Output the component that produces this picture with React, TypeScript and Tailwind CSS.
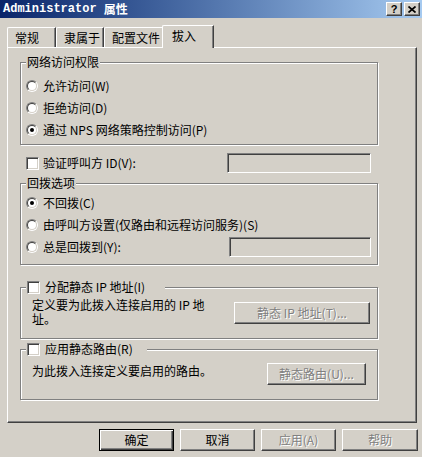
import React from "react";

const raised =
  "border border-t-white border-l-white border-r-[#404040] border-b-[#404040] shadow-[inset_-1px_-1px_0_#808080]";
const sunken =
  "border border-t-[#808080] border-l-[#808080] border-r-white border-b-white shadow-[inset_1px_1px_0_#404040,inset_-1px_-1px_0_#d4d0c8]";
const grayText = "text-[#808080] [text-shadow:1px_1px_0_#fff]";

function Radio({ checked }: { checked?: boolean }) {
  return (
    <span className="flex h-[12px] w-[12px] shrink-0 rounded-full border border-t-[#808080] border-l-[#808080] border-r-white border-b-white">
      <span className="flex h-full w-full items-center justify-center rounded-full border border-t-[#404040] border-l-[#404040] border-r-[#d4d0c8] border-b-[#d4d0c8] bg-white">
        {checked && <span className="h-[4px] w-[4px] rounded-full bg-black" />}
      </span>
    </span>
  );
}

function Check() {
  return <span className={"block h-[13px] w-[13px] shrink-0 bg-white " + sunken} />;
}

function Field({ className = "" }: { className?: string }) {
  return <div className={"h-[20px] shrink-0 bg-[#d4d0c8] " + sunken + " " + className} />;
}

function Button({
  children,
  disabled,
  primary,
  className = "",
}: {
  children: React.ReactNode;
  disabled?: boolean;
  primary?: boolean;
  className?: string;
}) {
  const frame = primary
    ? "border border-black shadow-[inset_1px_1px_0_#fff,inset_-1px_-1px_0_#404040,inset_-2px_-2px_0_#808080]"
    : raised;
  return (
    <div
      className={
        "flex h-[22px] shrink-0 items-center justify-center bg-[#d4d0c8] leading-[14px] " +
        frame +
        " " +
        (disabled ? grayText : "text-black") +
        " " +
        className
      }
    >
      {children}
    </div>
  );
}

function Group({
  label,
  className = "",
  children,
}: {
  label: React.ReactNode;
  className?: string;
  children: React.ReactNode;
}) {
  return (
    <div
      className={
        "relative w-[358px] shrink-0 border border-[#808080] shadow-[1px_1px_0_#fff,inset_1px_1px_0_#fff] " +
        className
      }
    >
      <div className="absolute left-[5px] top-[-8px] flex h-[14px] items-center bg-[#d4d0c8] leading-[14px]">
        {label}
      </div>
      {children}
    </div>
  );
}

function RadioRow({ checked, children }: { checked?: boolean; children: React.ReactNode }) {
  return (
    <div className="flex h-[22px] items-center gap-[5px] pl-[5px] leading-[14px]">
      <Radio checked={checked} />
      {children}
    </div>
  );
}

function Tab({
  children,
  width,
  active,
}: {
  children: React.ReactNode;
  width: string;
  active?: boolean;
}) {
  if (active) {
    return (
      <div
        className={
          "relative z-10 -mx-[2px] -mb-px flex h-[23px] items-center rounded-tl-[2px] border-t border-l border-r border-t-white border-l-white border-r-[#404040] bg-[#d4d0c8] pb-[2px] pl-[9px] leading-[14px] shadow-[inset_-1px_0_0_#808080] " +
          width
        }
      >
        {children}
      </div>
    );
  }
  return (
    <div
      className={
        "flex h-[20px] items-center rounded-tl-[2px] border-t border-l border-r border-t-white border-l-white border-r-[#404040] pl-[7px] leading-[14px] shadow-[inset_-1px_0_0_#808080] " +
        width
      }
    >
      {children}
    </div>
  );
}

function TitleButton({ children }: { children: React.ReactNode }) {
  return (
    <div className={"flex h-[14px] w-[16px] items-center justify-center bg-[#d4d0c8] " + raised}>
      {children}
    </div>
  );
}

export default function App() {
  return (
    <div className="h-[457px] w-[422px] overflow-hidden bg-[#d4d0c8] font-['Noto_Sans_CJK_SC',sans-serif] text-[12px] text-black">
      {/* title bar */}
      <div className="flex h-[18px] items-center bg-linear-to-r from-[#0a246a] to-[#a6caf0] pl-[3px] pr-[2px]">
        <span className="font-['Liberation_Mono',monospace] font-bold leading-[14px] text-white">Administrator</span>
        <span className="ml-[7px] font-bold leading-[14px] text-white">属性</span>
        <div className="ml-auto flex gap-[2px]">
          <TitleButton>
            <span className="font-['Liberation_Sans',sans-serif] text-[11px] font-bold leading-[11px]">?</span>
          </TitleButton>
          <TitleButton>
            <svg width="8" height="7" viewBox="0 0 8 7">
              <path d="M0.5 0.5L7.5 6.5M7.5 0.5L0.5 6.5" stroke="#000" strokeWidth="1.7" />
            </svg>
          </TitleButton>
        </div>
      </div>

      {/* tabs */}
      <div className="mt-[7px] flex h-[22px] items-end pl-[7px]">
        <Tab width="w-[49px]">常规</Tab>
        <Tab width="w-[48px]">隶属于</Tab>
        <Tab width="w-[60px]">配置文件</Tab>
        <Tab width="w-[52px]" active>
          拔入
        </Tab>
      </div>

      {/* tab page */}
      <div className={"ml-[7px] flex h-[376px] w-[410px] flex-col px-[12px] " + raised}>
        <Group label={<span className="px-[1px]">网络访问权限</span>} className="mt-[14px] h-[83px] pt-[12px]">
          <RadioRow>允许访问(W)</RadioRow>
          <RadioRow>拒绝访问(D)</RadioRow>
          <RadioRow checked>通过 NPS 网络策略控制访问(P)</RadioRow>
        </Group>

        <div className="mt-[8px] flex h-[20px] w-[358px] items-center leading-[14px]">
          <span className="ml-[6px]">
            <Check />
          </span>
          <span className="ml-[4px]">验证呼叫方 ID(V):</span>
          <Field className="ml-auto mr-[7px] w-[144px]" />
        </div>

        <Group label={<span className="px-[1px]">回拨选项</span>} className="mt-[10px] h-[82px] pt-[8px]">
          <RadioRow checked>不回拨(C)</RadioRow>
          <RadioRow>由呼叫方设置(仅路由和远程访问服务)(S)</RadioRow>
          <div className="flex h-[22px] items-center gap-[5px] pl-[5px] leading-[14px]">
            <Radio />
            总是回拨到(Y):
            <Field className="ml-auto mr-[6px] w-[142px]" />
          </div>
        </Group>

        <Group
          label={
            <span className="flex items-center gap-[5px] pr-[20px] pl-[1px]">
              <Check />
              分配静态 IP 地址(I)
            </span>
          }
          className="mt-[22px] flex h-[52px] items-start"
        >
          <div className="ml-[11px] mt-[10px] w-[184px] leading-[14px]">定义要为此拨入连接启用的 IP 地址。</div>
          <Button disabled className="ml-auto mr-[7px] mt-[14px] w-[136px]">
            静态 IP 地址(T)...
          </Button>
        </Group>

        <Group
          label={
            <span className="flex items-center gap-[5px] pr-[14px] pl-[1px]">
              <Check />
              应用静态路由(R)
            </span>
          }
          className="mt-[10px] flex h-[51px] items-start"
        >
          <div className="pl-[11px] pt-[14px] leading-[14px]">为此拨入连接定义要启用的路由。</div>
          <Button disabled className="ml-auto mr-[11px] mt-[13px] w-[99px]">
            静态路由(U)...
          </Button>
        </Group>
      </div>

      {/* dialog buttons */}
      <div className="mt-[6px] flex justify-end gap-[6px] pr-[4px]">
        <Button primary className="w-[75px]">
          确定
        </Button>
        <Button className="w-[75px]">取消</Button>
        <Button disabled className="w-[75px]">
          应用(A)
        </Button>
        <Button disabled className="w-[76px]">
          帮助
        </Button>
      </div>
    </div>
  );
}
